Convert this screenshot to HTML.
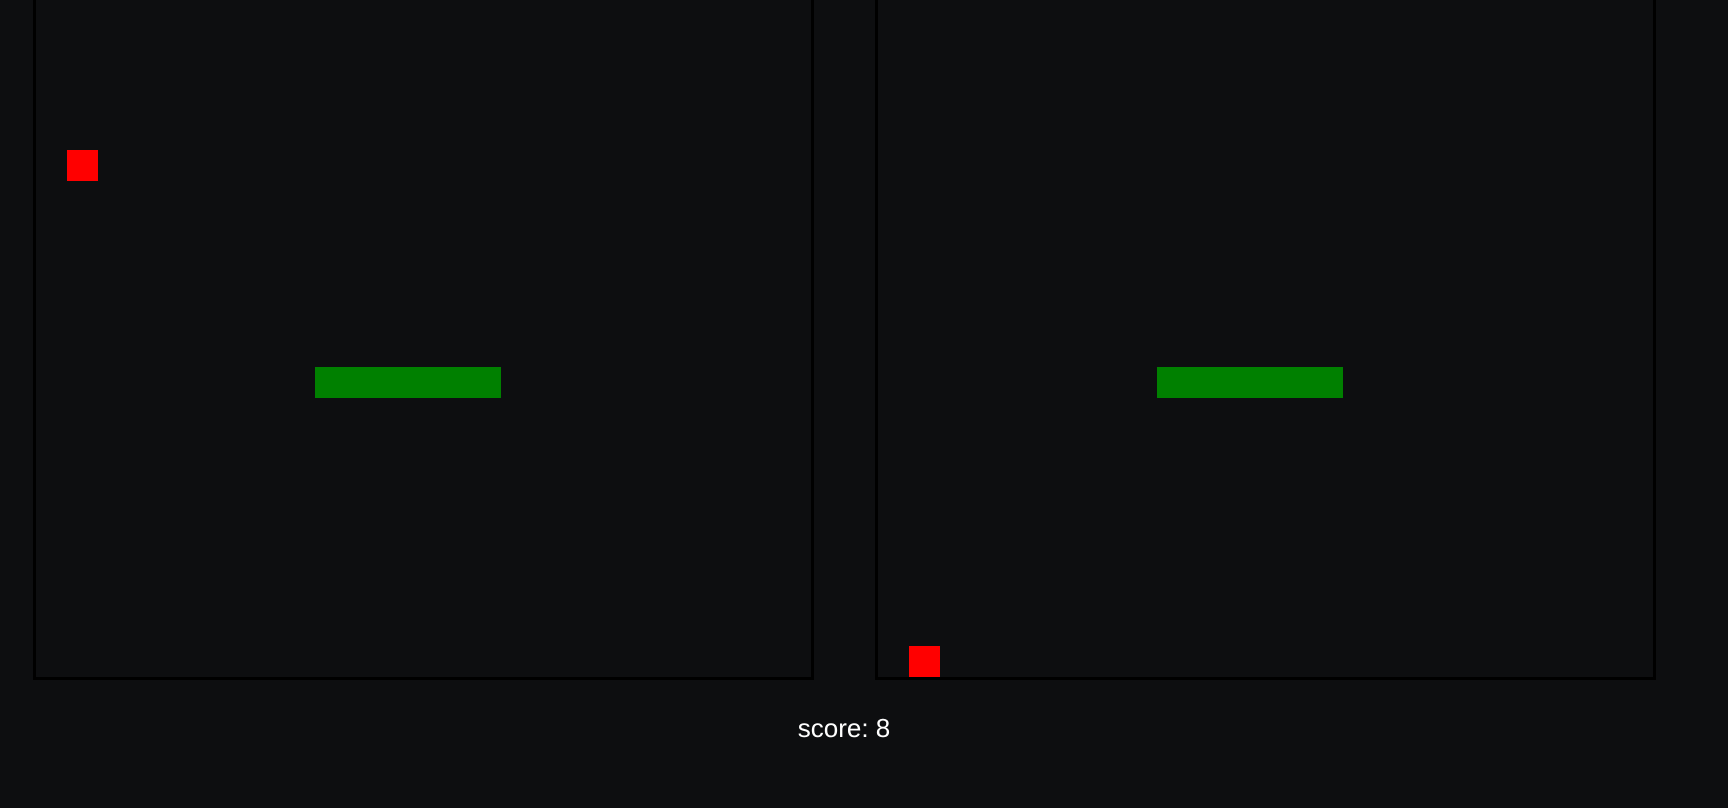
<!DOCTYPE html>
<html><head><style>
html,body{margin:0;padding:0;width:1728px;height:808px;overflow:hidden;background:#0d0e10;}
.b{position:absolute;top:-101px;width:775px;height:775px;border:3px solid #000;background:#0d0e10;}
.r{position:absolute;width:31px;height:31px;background:#f00;}
.g{position:absolute;width:186px;height:31px;background:#008000;}
.s{position:absolute;left:0;width:1688px;top:713px;text-align:center;color:#fff;font:26px "Liberation Sans",sans-serif;}
</style></head><body>
<div class="b" style="left:33px"></div>
<div class="b" style="left:875px"></div>
<div class="r" style="left:67px;top:150px"></div>
<div class="g" style="left:315px;top:367px"></div>
<div class="r" style="left:909px;top:646px"></div>
<div class="g" style="left:1157px;top:367px"></div>
<div class="s">score: 8</div>
</body></html>
